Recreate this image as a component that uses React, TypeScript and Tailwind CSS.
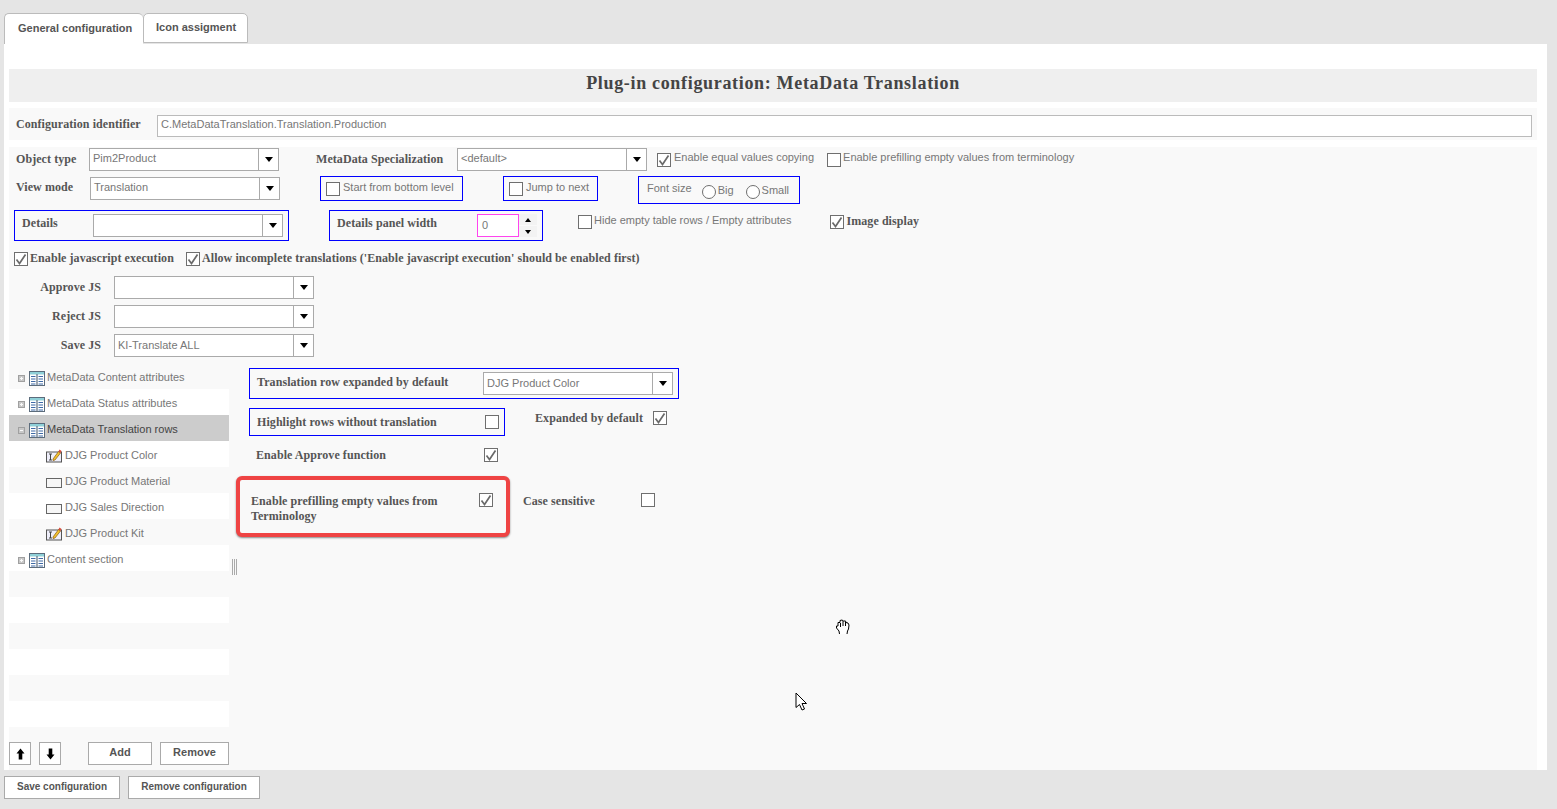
import React from "react";

const Check = () => (
  <svg viewBox="0 0 14 14" className="w-[14px] h-[14px] absolute left-0 top-0">
    <path d="M2.5 7.5 L5.5 11.5 L11.5 2.5" fill="none" stroke="#6a6a6a" strokeWidth="1.7" />
  </svg>
);

function Cb({ on = false }: { on?: boolean }) {
  return (
    <span className="relative block w-[14px] h-[14px] shrink-0 border border-[#6f6f6f] bg-white">
      {on && (
        <span className="absolute -left-px -top-px w-[14px] h-[14px]">
          <Check />
        </span>
      )}
    </span>
  );
}

const Radio = () => <span className="block w-[14px] h-[14px] shrink-0 rounded-full border border-[#6f6f6f] bg-white" />;

function Sel({ w, value = "", lh = "leading-[19px]" }: { w: string; value?: string; lh?: string }) {
  return (
    <div className={`${w} h-[23px] flex shrink-0 border border-[#aaa] bg-white text-[11px] text-[#777]`}>
      <div className={`flex-1 px-[3px] ${lh} overflow-hidden whitespace-nowrap`}>{value}</div>
      <div className="w-[20px] border-l border-[#aaa] flex items-center justify-center">
        <span className="w-0 h-0 border-l-[4px] border-r-[4px] border-t-[5px] border-l-transparent border-r-transparent border-t-black" />
      </div>
    </div>
  );
}

function B({ children, className = "" }: { children: React.ReactNode; className?: string }) {
  return (
    <span className={`font-['Liberation_Serif',serif] font-bold text-[12px] leading-[14px] tracking-[0.07px] text-[#555] whitespace-nowrap ${className}`}>
      {children}
    </span>
  );
}

function T({ children, className = "" }: { children: React.ReactNode; className?: string }) {
  return <span className={`text-[11px] text-[#777] whitespace-nowrap ${className}`}>{children}</span>;
}

const TableIcon = () => (
  <svg width="16" height="15" viewBox="0 0 16 15" className="shrink-0 block">
    <rect x="0.5" y="0.5" width="15" height="14" fill="#fff" stroke="#5c6c7c" />
    <rect x="1" y="1" width="14" height="2.5" fill="#8fd0d8" />
    <path d="M8 3v11" stroke="#5c6c7c" strokeWidth="1.2" />
    <path d="M2 5.5h4.5M2 8h4.5M2 10.5h4.5M2 13h4.5M9.5 5.5h4.5M9.5 8h4.5M9.5 10.5h4.5M9.5 13h4.5" stroke="#3f6aa6" />
  </svg>
);

const EditIcon = () => (
  <svg width="16" height="15" viewBox="0 0 16 15" className="shrink-0 block">
    <rect x="0.5" y="3" width="15" height="10" fill="#eeeefa" stroke="#555" />
    <path d="M3 5h3M3 11h3M4.5 5v6" stroke="#444" />
    <path d="M7 10 L12.5 2.5 L14.5 4 L9 11 L7 11.5 Z" fill="#f2c230" stroke="#8a5a10" strokeWidth="0.7" />
    <path d="M12.5 2.5 L13.5 0.5 L15.5 2 L14.5 4 Z" fill="#d84a3a" />
  </svg>
);

const FieldIcon = () => (
  <svg width="16" height="15" viewBox="0 0 16 15" className="shrink-0 block">
    <rect x="0.5" y="3.5" width="15" height="9" fill="#f6f6f6" stroke="#666" />
  </svg>
);

const Expand = ({ minus = false }: { minus?: boolean }) => (
  <svg width="7" height="7" viewBox="0 0 7 7" className="shrink-0 block">
    <rect width="7" height="7" fill="#a0a0a0" />
    <rect x="1" y="1" width="5" height="5" fill="#c8c8c8" />
    <path d={minus ? "M2 3.5h3" : "M2 3.5h3M3.5 2v3"} stroke="#fafafa" />
  </svg>
);

function Tree({ label, icon, odd, child, selected, minus }: { label?: string; icon?: React.ReactNode; odd?: boolean; child?: boolean; selected?: boolean; minus?: boolean }) {
  const bg = selected ? "bg-[#cccccc]" : odd ? "bg-[#f9f9f9]" : "bg-white";
  return (
    <div className={`h-[26px] pt-[4px] flex items-center text-[11px] ${bg} ${selected ? "text-[#444]" : "text-[#777]"} ${child ? "pl-[37px]" : "pl-[9px]"}`}>
      {label && !child && <Expand minus={minus} />}
      {label && <span className={`flex ${child ? "" : "ml-[4px]"}`}>{icon}</span>}
      {label && <span className={`${child ? "ml-[3px]" : "ml-[2px]"} -mt-[1px] whitespace-nowrap`}>{label}</span>}
    </div>
  );
}

const blue = "border border-[#0000ff]";

const Btn = ({ w, children, small }: { w: string; children?: React.ReactNode; small?: boolean }) => (
  <div className={`${w} h-[23px] border border-[#aaa] bg-white flex items-center justify-center ${small ? "text-[10px] pb-[3px]" : "text-[11px] pb-[2px]"} font-bold text-[#555] whitespace-nowrap`}>{children}</div>
);

const ArrowUp = () => (
  <svg width="9" height="12" viewBox="0 0 9 12" className="mt-[2px]">
    <path d="M4.5 0.5 L8.5 5.5 L6.3 5.5 L6.3 11.5 L2.7 11.5 L2.7 5.5 L0.5 5.5 Z" fill="#000" />
  </svg>
);
const ArrowDown = () => (
  <svg width="9" height="12" viewBox="0 0 9 12" className="mt-[2px]">
    <path d="M4.5 11.5 L8.5 6.5 L6.3 6.5 L6.3 0.5 L2.7 0.5 L2.7 6.5 L0.5 6.5 Z" fill="#000" />
  </svg>
);

export default function App() {
  return (
    <div className="relative w-[1557px] h-[809px] overflow-hidden bg-[#e5e5e5] font-['Liberation_Sans',sans-serif]">
      <div className="h-[13px]" />
      <div className="flex pl-[4px] h-[31px] text-[11px] font-bold text-[#555]">
        <div className="w-[139px] h-[31px] bg-white rounded-t-[5px] border-t border-l border-[#bbb] pl-[13px] pt-[6px]">General configuration</div>
        <div className="w-[105px] h-[30px] bg-white rounded-t-[5px] border border-[#bbb] pl-[12px] pt-[5px]">Icon assigment</div>
      </div>
      <div className="ml-[4px] w-[1543px] h-[726px] bg-white px-[5px] pt-[25px] flex flex-col items-start">
        <div className="w-[1528px] h-[33px] pb-[4px] bg-[#efefef] flex items-center justify-center font-['Liberation_Serif',serif] font-bold text-[18px] tracking-[0.67px] text-[#444]">
          Plug-in configuration: MetaData Translation
        </div>
        <div className="mt-[6px] w-[1528px] h-[32px] bg-[#f9f9f9] flex items-center pl-[7px]">
          <B className="w-[141px] tracking-[0.2px]">Configuration identifier</B>
          <div className="w-[1375px] h-[22px] mt-[4px] border border-[#bbb] bg-white text-[11px] text-[#777] pl-[3px] leading-[17px]">C.MetaDataTranslation.Translation.Production</div>
        </div>

        <div className="mt-[7px] w-[1528px] h-[623px] bg-[#f9f9f9] flex flex-col">
          <div className="mt-[1px] h-[23px] flex items-center">
            <B className="ml-[7px] w-[73px] -mt-[2px]">Object type</B>
            <Sel w="w-[190px]" value="Pim2Product" />
            <B className="ml-[37px] w-[141px] -mt-[2px]">MetaData Specialization</B>
            <Sel w="w-[190px]" value="<default>" />
            <span className="flex ml-[10px]"><Cb on /></span>
            <T className="ml-[3px] -mt-[4px]">Enable equal values copying</T>
            <span className="flex ml-[13px]"><Cb /></span>
            <T className="ml-[2px] -mt-[4px]">Enable prefilling empty values from terminology</T>
          </div>
          <div className="mt-[5px] h-[26px] flex items-start">
            <B className="ml-[7px] w-[74px] mt-[4px]">View mode</B>
            <div className="mt-[1px]"><Sel w="w-[190px]" value="Translation" /></div>
            <div className={`ml-[40px] w-[143px] h-[25px] ${blue} flex items-center pl-[5px]`}>
              <Cb />
              <T className="ml-[3px] -mt-[3px]">Start from bottom level</T>
            </div>
            <div className={`ml-[40px] w-[95px] h-[25px] ${blue} flex items-center pl-[5px]`}>
              <Cb />
              <T className="ml-[3px] -mt-[3px]">Jump to next</T>
            </div>
            <div className={`ml-[40px] w-[162px] h-[28px] ${blue} flex items-center pl-[8px]`}>
              <T className="-mt-[4px]">Font size</T>
              <span className="flex ml-[10px] mt-[4px]"><Radio /></span>
              <T className="ml-[2px]">Big</T>
              <span className="flex ml-[12px] mt-[4px]"><Radio /></span>
              <T className="ml-[2px]">Small</T>
            </div>
          </div>
          <div className="mt-[8px] h-[31px] flex items-start">
            <div className={`ml-[5px] w-[275px] h-[31px] ${blue} flex items-center pl-[7px]`}>
              <B className="w-[71px] -mt-[5px]">Details</B>
              <Sel w="w-[190px]" />
            </div>
            <div className={`ml-[40px] w-[214px] h-[31px] ${blue} flex items-center pl-[7px]`}>
              <B className="w-[140px] -mt-[5px]">Details panel width</B>
              <div className="w-[42px] h-[23px] border border-[#ff44ee] bg-white text-[11px] text-[#777] pl-[4px] leading-[20px]">0</div>
              <div className="w-[18px] h-[23px] flex flex-col gap-[1px]">
                <div className="flex-1 bg-[#f3f3f3] flex items-center justify-center">
                  <span className="w-0 h-0 border-l-[3px] border-r-[3px] border-b-[4px] border-l-transparent border-r-transparent border-b-black" />
                </div>
                <div className="flex-1 bg-[#f3f3f3] flex items-center justify-center">
                  <span className="w-0 h-0 border-l-[3px] border-r-[3px] border-t-[4px] border-l-transparent border-r-transparent border-t-black" />
                </div>
              </div>
            </div>
            <div className="ml-[35px] mt-[5px] flex items-start">
              <Cb />
              <T className="ml-[2px] -mt-[3px]">Hide empty table rows / Empty attributes</T>
            </div>
            <div className="ml-[39px] mt-[5px] flex items-center">
              <Cb on />
              <B className="ml-[2px] -mt-[2px]">Image display</B>
            </div>
          </div>
          <div className="mt-[9px] h-[16px] flex items-center pl-[5px]">
            <span className="flex mt-[1px]"><Cb on /></span>
            <B className="ml-[2px] w-[142px]">Enable javascript execution</B>
            <span className="flex ml-[14px] mt-[1px]"><Cb on /></span>
            <B className="ml-[2px]">Allow incomplete translations ('Enable javascript execution' should be enabled first)</B>
          </div>
          <div className="mt-[10px] flex flex-col gap-[6px]">
            {[["Approve JS", ""], ["Reject JS", ""], ["Save JS", "KI-Translate ALL"]].map(([l, v]) => (
              <div key={l} className="h-[23px] flex items-center">
                <B className="w-[92px] text-right -mt-[2px]">{l}</B>
                <span className="flex ml-[13px]"><Sel w="w-[200px]" value={v} lh="leading-[21px]" /></span>
              </div>
            ))}
          </div>
          <div className="mt-[6px] flex flex-1">
            <div className="w-[220px] flex flex-col">
              <Tree odd label="MetaData Content attributes" icon={<TableIcon />} />
              <Tree label="MetaData Status attributes" icon={<TableIcon />} />
              <Tree selected minus label="MetaData Translation rows" icon={<TableIcon />} />
              <Tree child label="DJG Product Color" icon={<EditIcon />} />
              <Tree child odd label="DJG Product Material" icon={<FieldIcon />} />
              <Tree child label="DJG Sales Direction" icon={<FieldIcon />} />
              <Tree child odd label="DJG Product Kit" icon={<EditIcon />} />
              <Tree label="Content section" icon={<TableIcon />} />
              {[1, 2, 3, 4, 5, 6].map((i) => (
                <Tree key={i} odd={i % 2 === 1} />
              ))}
              <div className="mt-[15px] flex">
                <Btn w="w-[22px]"><ArrowUp /></Btn>
                <span className="flex ml-[8px]"><Btn w="w-[22px]"><ArrowDown /></Btn></span>
                <span className="flex ml-[27px]"><Btn w="w-[64px]">Add</Btn></span>
                <span className="flex ml-[8px]"><Btn w="w-[69px]">Remove</Btn></span>
              </div>
            </div>
            <div className="w-[20px] flex items-start pl-[3px] pt-[196px] gap-[1px]">
              <div className="w-px h-[16px] bg-[#aaa]" />
              <div className="w-px h-[16px] bg-[#aaa]" />
              <div className="w-px h-[16px] bg-[#aaa]" />
            </div>
            <div className="flex flex-col">
              <div className={`mt-[5px] w-[430px] h-[31px] ${blue} flex items-center pl-[7px]`}>
                <B className="w-[226px] -mt-[3px]">Translation row expanded by default</B>
                <Sel w="w-[190px]" value="DJG Product Color" lh="leading-[21px]" />
              </div>
              <div className="mt-[9px] flex items-start">
                <div className={`w-[256px] h-[28px] ${blue} flex items-center pl-[7px]`}>
                  <B className="w-[228px]">Highlight rows without translation</B>
                  <Cb />
                </div>
                <B className="ml-[30px] mt-[3px] w-[118px]">Expanded by default</B>
                <span className="flex mt-[3px]"><Cb on /></span>
              </div>
              <div className="mt-[11px] flex items-center h-[16px] pl-[7px]">
                <B className="w-[228px]">Enable Approve function</B>
                <Cb on />
              </div>
              <div className="mt-[13px] flex items-start">
                <div className="-ml-[13px] w-[274px] h-[61px] border-[4px] border-[#ef4444] rounded-[6px] bg-[#f9f9f9] shadow-[0_1px_2px_#888] flex items-start pl-[11px] pt-[14px]">
                  <B className="w-[228px] leading-[15px]">Enable prefilling empty values from<br />Terminology</B>
                  <span className="flex -mt-[1px]"><Cb on /></span>
                </div>
                <B className="ml-[13px] mt-[18px] w-[118px]">Case sensitive</B>
                <span className="flex mt-[17px]"><Cb /></span>
              </div>
            </div>
          </div>
        </div>
      </div>
      <div className="mt-[6px] ml-[4px] flex gap-[8px]">
        <Btn small w="w-[116px]">Save configuration</Btn>
        <Btn small w="w-[132px]">Remove configuration</Btn>
      </div>

      <svg className="absolute left-[835px] top-[618px]" width="16" height="18" viewBox="0 0 16 18">
        <path d="M4.5 16 L4 13 L1.5 10 L1.5 8 L3 8 L3 4.5 L5 4.5 L5 2.5 L7 2 L8.5 3 L10.5 3 L11 4.5 L13 5 L14 7 L13.5 11 L12.5 13 L12 16" fill="#fff" stroke="#000" />
        <path d="M5.5 5v4M8 3v5M10.5 4v4" stroke="#000" />
      </svg>
      <svg className="absolute left-[795px] top-[692px]" width="14" height="20" viewBox="0 0 14 20">
        <path d="M1 1 L1 15.5 L4.5 12.5 L7 18 L9.5 17 L7 11.5 L11.5 11.5 Z" fill="#fff" stroke="#000" />
      </svg>
    </div>
  );
}
